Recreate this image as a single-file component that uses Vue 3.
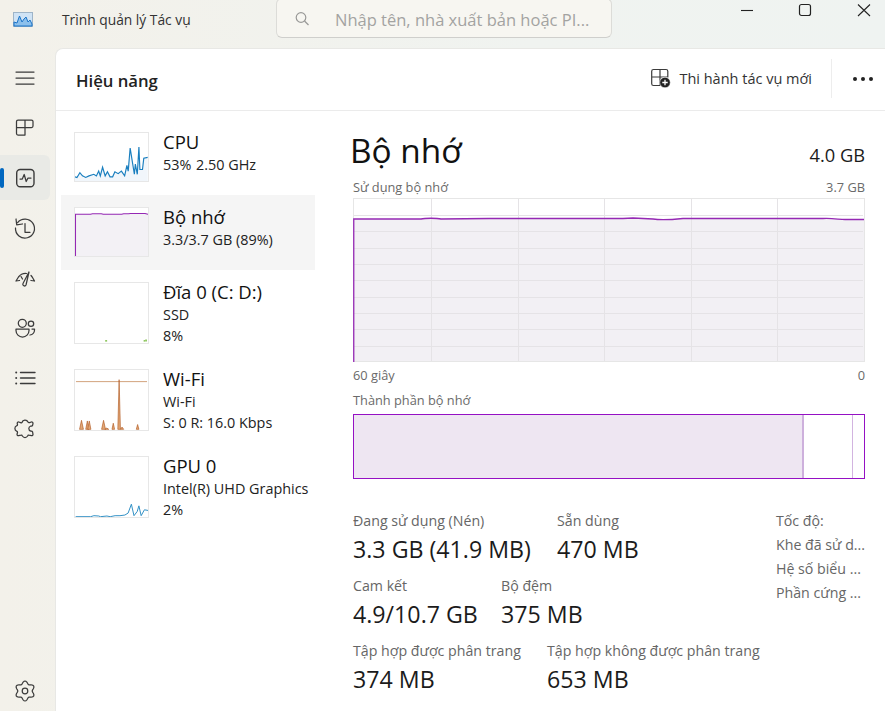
<script setup>
const railIcons = ['menu', 'proc', 'perf', 'hist', 'gauge', 'users', 'list', 'ext']

let gear = ''
for (let i = 0; i <= 72; i++) {
  const t = (i / 72) * Math.PI * 2
  const r = 8.6 + 1.4 * Math.cos(6 * t)
  gear += (i ? 'L' : 'M') + (12 + r * Math.sin(t)).toFixed(2) + ' ' + (12 - r * Math.cos(t)).toFixed(2)
}
gear += 'Z'

const cpuLine = '12,158 18,160 27,145 35,155 45,160 55,155 70,150 78,155 85,140 90,155 97,128 105,155 112,142 120,158 128,158 135,142 145,148 155,140 165,155 172,122 176,140 182,68 195,150 198,118 204,150 209,65 212,135 220,135 224,100 236,97'
const gpuLine = '224,741 270,741 280,738 295,739 300,741 320,739 330,741 345,738 360,738 375,736 385,730 395,703 403,738 413,725 418,708 425,738 435,720 446,722'
const wifiSpikes = [[32, 168, 6], [50, 170, 5], [56, 170, 5], [100, 168, 6], [110, 192, 6], [130, 177, 4], [148, 42, 4], [157, 189, 5], [205, 181, 4]]
const hGrid = [17, 33, 50, 66, 82, 99, 115, 131, 148]
const vGrid = [78, 165, 251, 338, 424]

const stats = [
  { cls: 'r1', items: [['Đang sử dụng (Nén)', '3.3 GB (41.9 MB)'], ['Sẵn dùng', '470 MB']] },
  { cls: 'r2', items: [['Cam kết', '4.9/10.7 GB'], ['Bộ đệm', '375 MB']] },
  { cls: 'r3', items: [['Tập hợp được phân trang', '374 MB'], ['Tập hợp không được phân trang', '653 MB']] }
]
const side = ['Tốc độ:', 'Khe đã sử d...', 'Hệ số biểu ...', 'Phần cứng ...']
</script>

<template>
  <div class="app">
    <header class="titlebar">
      <div class="tb-left">
        <svg class="app-icon" width="20" height="15" viewBox="0 0 20 15">
          <rect x="0.5" y="0.5" width="19" height="14" fill="#cfe3f5" stroke="#9db4c8" />
          <path d="M1 13 L1 10 L4 11 L6.5 4 L9 10 L11 7 L13 5 L15 10 L17 8 L19 12 L19 14 L1 14Z" fill="#8cc0ec" stroke="#1b74c8" stroke-width="1" />
        </svg>
        <span class="app-name">Trình quản lý Tác vụ</span>
      </div>
      <div class="search">
        <svg width="16" height="16" viewBox="0 0 16 16" fill="none" stroke="#9a9a98" stroke-width="1.2">
          <circle cx="7" cy="6.5" r="4.8" />
          <path d="M10.5 10 L14.5 14" />
        </svg>
        <span>Nhập tên, nhà xuất bản hoặc PI...</span>
      </div>
      <div class="controls">
        <span class="ctl"><svg width="14" height="14" viewBox="0 0 14 14" stroke="#222" fill="none" stroke-width="1.1"><path d="M1 7.5 H13" /></svg></span>
        <span class="ctl"><svg width="14" height="14" viewBox="0 0 14 14" stroke="#222" fill="none" stroke-width="1.2"><rect x="1.5" y="1.5" width="11" height="11" rx="2" /></svg></span>
        <span class="ctl"><svg width="14" height="14" viewBox="0 0 14 14" stroke="#222" fill="none" stroke-width="1.1"><path d="M1 1.5 L13 13 M13 1.5 L1 13" /></svg></span>
      </div>
    </header>

    <div class="frame">
      <nav class="rail">
        <button v-for="name in railIcons" :key="name" class="rail-btn" :class="{ on: name === 'perf' }">
          <svg width="24" height="24" viewBox="0 0 24 24" fill="none" stroke="#3b3b3b" stroke-width="1.25" stroke-linecap="round" stroke-linejoin="round">
            <template v-if="name === 'menu'"><path d="M3 6 H21 M3 12 H21 M3 18 H21" /></template>
            <template v-else-if="name === 'proc'"><path d="M5 4 H18.5 A1.5 1.5 0 0 1 20 5.5 V10 A1.5 1.5 0 0 1 18.5 11.5 H12 V19 H5 A1.5 1.5 0 0 1 3.5 17.5 V5.5 A1.5 1.5 0 0 1 5 4Z M3.5 11.5 H12 M12 4 V11.5" /></template>
            <template v-else-if="name === 'perf'"><rect x="3.7" y="3.5" width="17.3" height="17.3" rx="3.5" stroke-width="1.4" /><path d="M7 13 H9.3 L11.2 8.5 L13.2 15.5 L15 12 H18" /></template>
            <template v-else-if="name === 'hist'"><path d="M4.6 6.6 A9.5 9.5 0 1 1 2.5 12 M3 3 L3.7 8.8 L9.5 8 M12 7.5 V16.3 H17" /></template>
            <template v-else-if="name === 'gauge'"><path d="M3 15 L5.5 11 A9 9 0 0 1 13.5 7.5 M18 9.5 A9 9 0 0 1 19.5 11.5 L21.5 15 M3 15 L6.5 14.5 M21.5 15 L18 14.5 M16 6 L10 17.5 A1.6 1.6 0 0 0 13 19 Z M8 10.5 L9.5 13" /></template>
            <template v-else-if="name === 'users'"><circle cx="9.3" cy="7.3" r="4" /><circle cx="18" cy="7.7" r="2.7" /><path d="M3 13 H16 V14.5 A6.5 6.5 0 0 1 3 14.5Z M19 13 H21.5 V14 A5 5 0 0 1 17 19" /></template>
            <template v-else-if="name === 'list'"><path d="M7.5 6.5 H22 M7.5 12 H22 M7.5 17.5 H22" stroke-width="1.4" /><circle cx="3.2" cy="6.5" r="1" fill="#3b3b3b" stroke="none" /><circle cx="3.2" cy="12" r="1" fill="#3b3b3b" stroke="none" /><circle cx="3.2" cy="17.5" r="1" fill="#3b3b3b" stroke="none" /></template>
            <template v-else-if="name === 'ext'"><path d="M9 6.5 A3.2 3.2 0 0 1 15 6 C15.3 6.7 16 6.8 16.6 6.6 L18.3 6 A1.4 1.4 0 0 1 20 7.4 L19.6 9.3 C19.3 10 18.5 10.2 17.8 10 A2.7 2.7 0 0 0 17.8 15.2 C18.5 15 19.3 15.3 19.6 16 L20 18.3 A1.4 1.4 0 0 1 18.3 19.7 L16 19.2 C15.3 19 14.8 19.4 14.6 20 A3 3 0 0 1 9.4 20 C9.2 19.4 8.7 19 8 19.2 L5.7 19.7 A1.4 1.4 0 0 1 4 18.3 L4.5 16.5 C4.6 15.8 4.2 15.4 3.6 15.2 A3 3 0 0 1 3.6 9.8 C4.2 9.6 4.6 9.2 4.5 8.5 L4.2 7.4 A1.4 1.4 0 0 1 5.8 6 L7.6 6.6 C8.2 6.9 8.8 6.8 9 6.5Z" /></template>
          </svg>
        </button>
        <button class="rail-btn settings">
          <svg width="24" height="24" viewBox="0 0 24 24" fill="none" stroke="#3b3b3b" stroke-width="1.2" stroke-linejoin="round">
            <path :d="gear" />
            <circle cx="12" cy="12" r="2.8" />
          </svg>
        </button>
      </nav>

      <main class="main">
        <div class="head">
          <h1>Hiệu năng</h1>
          <div class="new-task">
            <svg width="24" height="24" viewBox="0 0 24 24" fill="none" stroke="#3b3b3b" stroke-width="1.2">
              <path d="M5.5 3.5 H18 A1.8 1.8 0 0 1 19.8 5.3 V11 H12 V19.5 H5.5 A1.8 1.8 0 0 1 3.7 17.7 V5.3 A1.8 1.8 0 0 1 5.5 3.5Z M3.7 11 H12 M12 3.5 V11" />
              <circle cx="17" cy="16.5" r="5.3" fill="#222" stroke="#fff" stroke-width="0.6" />
              <path d="M17 13.8 V19.2 M14.3 16.5 H19.7" stroke="#fff" stroke-width="1.3" />
            </svg>
            <span>Thi hành tác vụ mới</span>
          </div>
          <div class="sep"></div>
          <div class="more"><i></i><i></i><i></i></div>
        </div>

        <div class="body">
          <aside class="list">
            <div class="item">
              <div class="thumb s">
                <svg viewBox="12 21 225 150" preserveAspectRatio="none">
                  <polygon :points="cpuLine + ' 236,171 12,171'" fill="#f1f6fb" />
                  <polyline :points="cpuLine" fill="none" stroke="#1a7fbf" stroke-width="3.6" />
                </svg>
              </div>
              <div class="info">
                <div class="name">CPU</div>
                <div class="sub">53% <span class="gap">2.50 GHz</span></div>
              </div>
            </div>

            <div class="item sel">
              <div class="thumb s">
                <svg viewBox="0 0 75 50" preserveAspectRatio="none">
                  <rect x="0" y="6" width="75" height="44" fill="#f3f1f5" />
                  <path d="M0.5 50 V6.5 H16 L18 6 H27 L29 6.5 H48 L50 6 H55 L57 5.8 H72 L75 6.5" fill="none" stroke="#9528b4" stroke-width="1.1" />
                </svg>
              </div>
              <div class="info">
                <div class="name">Bộ nhớ</div>
                <div class="sub">3.3/3.7 GB (89%)</div>
              </div>
            </div>

            <div class="item tall">
              <div class="thumb">
                <svg viewBox="0 0 75 62" preserveAspectRatio="none">
                  <path d="M31 59.8 H33 M70.5 59.8 H72 M73 58.5 V60.5" stroke="#6cb52e" stroke-width="1.4" />
                </svg>
              </div>
              <div class="info">
                <div class="name">Đĩa 0 (C: D:)</div>
                <div class="sub">SSD</div>
                <div class="sub">8%</div>
              </div>
            </div>

            <div class="item tall">
              <div class="thumb">
                <svg viewBox="12 12 225 186" preserveAspectRatio="none">
                  <path d="M15 48 H234" stroke="#cf9f78" stroke-width="3" fill="none" />
                  <polygon v-for="s in wifiSpikes" :key="s[0]" :points="`${s[0] - s[2]},196 ${s[0]},${s[1]} ${s[0] + s[2]},196`" fill="#e2a878" stroke="#b25a22" stroke-width="2" />
                </svg>
              </div>
              <div class="info">
                <div class="name">Wi-Fi</div>
                <div class="sub">Wi-Fi</div>
                <div class="sub">S: 0 R: 16.0 Kbps</div>
              </div>
            </div>

            <div class="item tall">
              <div class="thumb">
                <svg viewBox="222 559 224 183" preserveAspectRatio="none">
                  <polyline :points="gpuLine" fill="none" stroke="#2f8fc4" stroke-width="3" />
                </svg>
              </div>
              <div class="info">
                <div class="name">GPU 0</div>
                <div class="sub nowrap">Intel(R) UHD Graphics</div>
                <div class="sub">2%</div>
              </div>
            </div>
          </aside>

          <section class="panel">
            <div class="title-row">
              <h2>Bộ nhớ</h2>
              <span class="total">4.0 GB</span>
            </div>
            <div class="cap caps-top"><span>Sử dụng bộ nhớ</span><span>3.7 GB</span></div>
            <div class="graph">
              <svg width="512" height="164" viewBox="0 0 512 164">
                <rect x="0" y="21" width="512" height="143" fill="#f2f0f4" />
                <path v-for="y in hGrid" :key="'h' + y" :d="`M1 ${y + 0.5} H510`" stroke="#e5e3e6" />
                <path v-for="x in vGrid" :key="'v' + x" :d="`M${x + 0.5} 1 V163`" stroke="#e5e3e6" />
                <rect x="0.5" y="0.5" width="511" height="163" fill="none" stroke="#e6e6e6" />
                <path d="M0.75 164 V21 H68 C72 20 84 20 88 21 L136 20.5 H270 L280 20 L300 21 C306 22 320 21.5 330 20.5 H470 C480 20 486 21.5 492 21.5 H511" fill="none" stroke="#9528b4" stroke-width="1.3" />
              </svg>
            </div>
            <div class="cap caps-bottom"><span>60 giây</span><span>0</span></div>
            <div class="cap caps-comp"><span>Thành phần bộ nhớ</span></div>
            <div class="composition">
              <div class="used"></div>
              <div class="standby"></div>
            </div>
            <div class="stats">
              <div class="stat-left">
                <div v-for="row in stats" :key="row.cls" class="stat-row" :class="row.cls">
                  <div v-for="it in row.items" :key="it[0]">
                    <div class="label">{{ it[0] }}</div>
                    <div class="value">{{ it[1] }}</div>
                  </div>
                </div>
              </div>
              <div class="stat-side">
                <div v-for="t in side" :key="t">{{ t }}</div>
              </div>
            </div>
          </section>
        </div>
      </main>
    </div>
  </div>
</template>

<style scoped>
.app {
  width: 885px;
  height: 711px;
  overflow: hidden;
  display: flex;
  flex-direction: column;
  background: linear-gradient(90deg, #f3f1ea 0%, #f0f3f0 60%, #eff3f1 100%);
  font-family: "Open Sans", "Noto Sans", sans-serif;
  color: #1b1b1b;
}
.titlebar {
  height: 48px;
  flex: none;
  display: flex;
  align-items: flex-start;
}
.tb-left {
  width: 276px;
  height: 38px;
  display: flex;
  align-items: center;
  padding-left: 13px;
  box-sizing: border-box;
}
.app-icon { margin-right: 29px; }
.app-name { font-size: 13.8px; color: #333; }
.search {
  width: 336px;
  height: 40px;
  margin-top: -2px;
  box-sizing: border-box;
  display: flex;
  align-items: center;
  padding: 2px 0 0 17px;
  gap: 25px;
  background: #f7f6f1;
  border: 1px solid #dcdcd8;
  border-bottom-color: #cfcfcc;
  border-radius: 6px;
  font-size: 16.5px;
  color: #a3a3a1;
  white-space: nowrap;
  overflow: hidden;
}
.controls {
  margin-left: auto;
  margin-right: -8px;
  display: grid;
  grid-template-columns: repeat(3, 58.5px);
  height: 20px;
}
.ctl {
  display: flex;
  align-items: center;
  justify-content: center;
  height: 20px;
}
.frame {
  flex: 1;
  min-height: 0;
  display: flex;
}
.rail {
  width: 56px;
  flex: none;
  box-sizing: border-box;
  padding-top: 7px;
  display: flex;
  flex-direction: column;
  gap: 5px;
}
.rail-btn {
  width: 50px;
  height: 45px;
  padding: 0;
  border: 0;
  background: none;
  border-radius: 0 6px 6px 0;
  display: flex;
  align-items: center;
  justify-content: center;
  position: relative;
}
.rail-btn.on { background: #e9eae6; }
.rail-btn.on::before {
  content: "";
  position: absolute;
  left: 0;
  top: 13px;
  width: 3.5px;
  height: 20px;
  border-radius: 2px;
  background: #0067c0;
}
.rail-btn.settings {
  margin-top: auto;
  height: 40px;
}
.main {
  flex: 1;
  min-width: 0;
  background: #fff;
  border-top-left-radius: 8px;
  border-top: 1px solid #e8e8e5;
  border-left: 1px solid #e8e8e5;
  margin-left: -1px;
  display: flex;
  flex-direction: column;
}
.head {
  height: 62px;
  flex: none;
  box-sizing: border-box;
  border-bottom: 1px solid #ebebeb;
  display: flex;
  align-items: center;
  padding-left: 20px;
}
h1 {
  margin: 1px auto 0 0;
  font-size: 16.7px;
  font-weight: 600;
  color: #222;
}
.new-task {
  display: flex;
  align-items: center;
  gap: 7px;
  font-size: 14.5px;
  color: #333;
  margin-top: -3px;
}
.new-task svg { margin-left: -1px; }
.sep {
  width: 1px;
  height: 39px;
  background: #ededed;
  margin: -3px 0 0 19px;
}
.more {
  display: flex;
  gap: 4px;
  margin: -2px 12px 0 21px;
}
.more i {
  width: 4px;
  height: 4px;
  border-radius: 50%;
  background: #222;
}
.body {
  flex: 1;
  min-height: 0;
  display: flex;
}
.list {
  width: 297px;
  flex: none;
  box-sizing: border-box;
  padding: 9px 0 0 5px;
}
.item {
  width: 254px;
  height: 75px;
  box-sizing: border-box;
  padding: 12px 0 0 13px;
  display: flex;
  gap: 14px;
}
.item.tall { height: 87px; }
.item.sel { background: #f5f5f5; }
.thumb {
  width: 75px;
  height: 62px;
  flex: none;
  box-sizing: border-box;
  border: 1px solid #e7e7e7;
  background: #fff;
}
.thumb.s { height: 50px; }
.thumb svg {
  display: block;
  width: 100%;
  height: 100%;
}
.info { margin-top: -2px; white-space: nowrap; }
.name {
  font-size: 18.5px;
  line-height: 24px;
  color: #111;
}
.sub {
  font-size: 14.4px;
  line-height: 21px;
  color: #222;
}
.gap { margin-left: 1px; }
.panel {
  width: 512px;
  flex: none;
  padding-top: 17px;
}
.title-row {
  height: 44px;
  display: flex;
  justify-content: space-between;
}
h2 {
  margin: 0 0 0 -3px;
  font-size: 33.4px;
  font-weight: 400;
  line-height: 44px;
  color: #111;
}
.total {
  font-size: 18.3px;
  line-height: 24px;
  margin-top: 15px;
}
.cap {
  display: flex;
  justify-content: space-between;
  font-size: 12.8px;
  line-height: 16px;
  color: #6a6a6a;
}
.caps-top { margin-top: 7px; margin-bottom: 3px; }
.caps-bottom { margin-top: 5px; }
.caps-comp { margin-top: 9px; margin-bottom: 6px; }
.graph { height: 164px; }
.graph svg { display: block; }
.composition {
  height: 65px;
  box-sizing: border-box;
  border: 1px solid #9511c4;
  display: flex;
  background: #fff;
}
.used {
  width: 448px;
  background: #eee6f2;
  border-right: 2px solid #cdb0dc;
}
.standby {
  width: 48px;
  border-right: 1px solid #d2b4e0;
}
.stats {
  margin-top: 32px;
  display: flex;
  justify-content: space-between;
}
.stat-row {
  display: grid;
  height: 65px;
}
.r1 { grid-template-columns: 204px auto; }
.r2 { grid-template-columns: 148px auto; }
.r3 { grid-template-columns: 194px auto; }
.label {
  font-size: 14.2px;
  line-height: 20px;
  color: #666;
  white-space: nowrap;
}
.value {
  font-size: 23.2px;
  line-height: 30px;
  margin-top: 3px;
  color: #1b1b1b;
  white-space: nowrap;
}
.stat-side {
  width: 89px;
  margin-top: -2px;
  font-size: 14.2px;
  line-height: 24px;
  color: #666;
  white-space: nowrap;
}
</style>

<style>
html, body { margin: 0; background: #fff; }
</style>
